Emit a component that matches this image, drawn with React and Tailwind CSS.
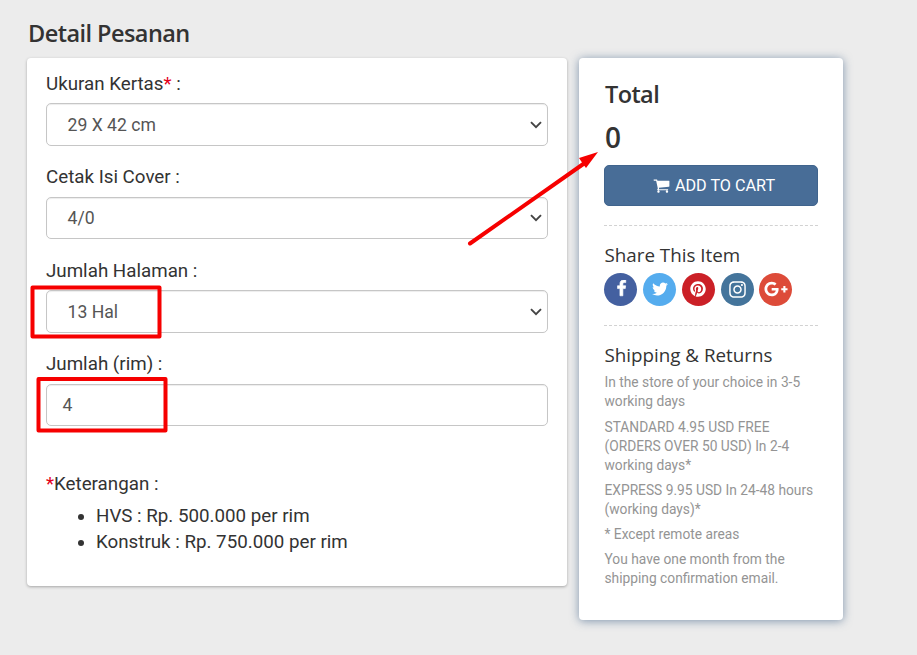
import React from "react";
import { FaPinterest, FaInstagram, FaGooglePlusG } from "react-icons/fa";

const CartIcon = () => (
  <svg viewBox="0 0 1792 1792" className="h-[17px] w-[17px] fill-current">
    <path d="M704 1536q0 52-38 90t-90 38-90-38-38-90 38-90 90-38 90 38 38 90zm896 0q0 52-38 90t-90 38-90-38-38-90 38-90 90-38 90 38 38 90zm128-1088v512q0 24-16.5 42.5t-40.5 21.5l-1044 122q13 60 13 70 0 16-24 64h920q26 0 45 19t19 45-19 45-45 19h-1024q-26 0-45-19t-19-45q0-11 8-31.5t16-36 21.5-40 15.5-29.5l-177-823h-204q-26 0-45-19t-19-45 19-45 45-19h256q16 0 28.5 6.5t19.5 15.5 13 24.5 8 26 5.5 29.5 4.5 26h1201q26 0 45 19t19 45z" />
  </svg>
);

const FacebookIcon = () => (
  <svg viewBox="0 0 1792 1792" className="mb-[3px] ml-px h-[17px] w-[19px] fill-current stroke-current stroke-[70]">
    <path d="M1343 12v264h-157q-86 0-116 36t-30 108v189h293l-39 296h-254v759h-306v-759h-255v-296h255v-218q0-186 104-288.5t277-102.5q147 0 228 12z" />
  </svg>
);

const TwitterIcon = () => (
  <svg viewBox="0 0 1792 1792" className="mb-[2px] ml-px h-[18px] w-[18px] fill-current">
    <path d="M1684 408q-67 98-162 167 1 14 1 42 0 130-38 259.5t-115.5 248.5-184.5 210.5-258 146-323 54.5q-271 0-496-145 35 4 78 4 225 0 401-138-105-2-188-64.5t-114-159.5q33 5 61 5 43 0 85-11-112-23-185.5-111.5t-73.5-205.5v-4q68 38 146 41-66-44-105-115t-39-154q0-88 44-163 121 149 294.5 238.5t371.5 99.5q-8-38-8-74 0-134 94.5-228.5t228.5-94.5q140 0 236 102 109-21 205-78-37 115-142 178 93-10 186-50z" />
  </svg>
);

function Field({ label, required, value, select }) {
  return (
    <div className="h-[93.5px]">
      <div className="flex h-[33px] items-start pt-[0.6px] text-[18.75px] leading-[26px]">
        <span>
          {label}
          {required && <span className="text-[#e3001b]">*</span>} :
        </span>
      </div>
      <div className="flex h-[42.67px] items-center justify-between rounded-[5px] border border-[#c6c6c6] pr-[5px] pl-[20.5px] text-[17.6px] text-[#555] shadow-[inset_0_1px_1px_rgba(0,0,0,0.075)]">
        <span className={select ? "pt-px" : "-ml-[5px]"}>{value}</span>
        {select && (
          <svg viewBox="0 0 12 8" className="mt-px h-2 w-3 fill-none stroke-[#444] stroke-[1.9]">
            <path d="M1 1.2l5 5 5-5" />
          </svg>
        )}
      </div>
    </div>
  );
}

const shipping = [
  ["In the store of your choice in 3-5", "working days"],
  ["STANDARD 4.95 USD FREE", "(ORDERS OVER 50 USD) In 2-4", "working days*"],
  ["EXPRESS 9.95 USD In 24-48 hours", "(working days)*"],
  ["* Except remote areas"],
  ["You have one month from the", "shipping confirmation email."],
];

export default function App() {
  return (
    <div className="relative h-[655px] w-[917px] overflow-hidden bg-[#ececec] pt-[17px] pl-[27px] font-['Roboto',sans-serif] text-[#333]">
      <h1 className="h-[41px] pl-px font-['Open_Sans',sans-serif] text-[23.5px] leading-[32px] font-semibold tracking-[-0.55px]">
        Detail Pesanan
      </h1>
      <div className="flex items-start gap-3">
        <section className="h-[528px] w-[540px] rounded-[4px] bg-white px-[19px] pt-3 shadow-[0_1px_3px_rgba(0,0,0,0.3)]">
          <Field label="Ukuran Kertas" required value="29 X 42 cm" select />
          <Field label="Cetak Isi Cover" value="4/0" select />
          <Field label="Jumlah Halaman" value="13 Hal" select />
          <Field label="Jumlah (rim)" value="4" />
          <div className="mt-[27px] text-[18.75px] leading-[26px]">
            <p>
              <span className="text-[#e3001b]">*</span>Keterangan :
            </p>
            <ul className="mt-[6px] list-disc pl-[50px]">
              <li>HVS : Rp. 500.000 per rim</li>
              <li>Konstruk : Rp. 750.000 per rim</li>
            </ul>
          </div>
        </section>

        <aside className="h-[562px] w-[264px] rounded-[4px] bg-white px-[25px] pt-5 shadow-[0_1px_10px_rgba(55,90,130,0.6)]">
          <h2 className="h-[33px] pl-px font-['Open_Sans',sans-serif] text-[23.5px] leading-[32px] font-semibold tracking-[-0.6px]">Total</h2>
          <div className="mt-[7px] h-[47px] pl-px font-['Open_Sans',sans-serif] text-[28px] leading-[39px] font-semibold">0</div>
          <button className="flex h-[41px] w-[214px] items-center justify-center gap-[5px] rounded-[5px] border border-[#40648d] bg-[#486d97] pl-[6px] text-[16.2px] text-white">
            <CartIcon />
            <span className="pt-px">ADD TO CART</span>
          </button>
          <div className="mt-[19px] w-[214px] border-t border-dashed border-[#d2d2d2]" />
          <h3 className="mt-4 pl-[0.5px] font-['Open_Sans',sans-serif] text-[18.8px] leading-[26px]">Share This Item</h3>
          <div className="mt-[5px] flex gap-[5.9px] text-white">
            <span className="flex size-[33px] items-center justify-center rounded-full bg-[#4460a0]"><FacebookIcon /></span>
            <span className="flex size-[33px] items-center justify-center rounded-full bg-[#55acee]"><TwitterIcon /></span>
            <span className="flex size-[33px] items-center justify-center rounded-full bg-[#cb2027] pb-px"><FaPinterest size={16} /></span>
            <span className="flex size-[33px] items-center justify-center rounded-full bg-[#44749b] pb-px"><FaInstagram size={19} /></span>
            <span className="-ml-[0.4px] flex size-[33px] items-center justify-center rounded-full bg-[#dd4b39] pb-[2px]"><FaGooglePlusG size={24} /></span>
          </div>
          <div className="mt-[19px] w-[214px] border-t border-dashed border-[#d2d2d2]" />
          <h3 className="mt-4 pl-[0.5px] font-['Open_Sans',sans-serif] text-[18.8px] leading-[26px]">Shipping &amp; Returns</h3>
          <div className="mt-[5.4px] flex flex-col gap-[6.3px] pl-[0.5px] text-[13.78px] leading-[18.95px] whitespace-nowrap text-[#949494]">
            {shipping.map((lines) => (
              <p key={lines[0]}>
                {lines.map((line) => (
                  <span key={line} className="block">{line}</span>
                ))}
              </p>
            ))}
          </div>
        </aside>
      </div>

      <svg viewBox="0 0 917 655" className="pointer-events-none absolute inset-0 h-[655px] w-[917px]">
        <g fill="none" stroke="#f60000" strokeWidth="4" strokeLinejoin="round" strokeLinecap="round">
          <rect x="32.5" y="287.5" width="127" height="49" />
          <rect x="38.5" y="379" width="127" height="51.5" />
          <path d="M470 243.5L584 163.5" />
        </g>
        <path d="M598 152L586 168L583 164L579 158Z" fill="#f60000" />
      </svg>
    </div>
  );
}
